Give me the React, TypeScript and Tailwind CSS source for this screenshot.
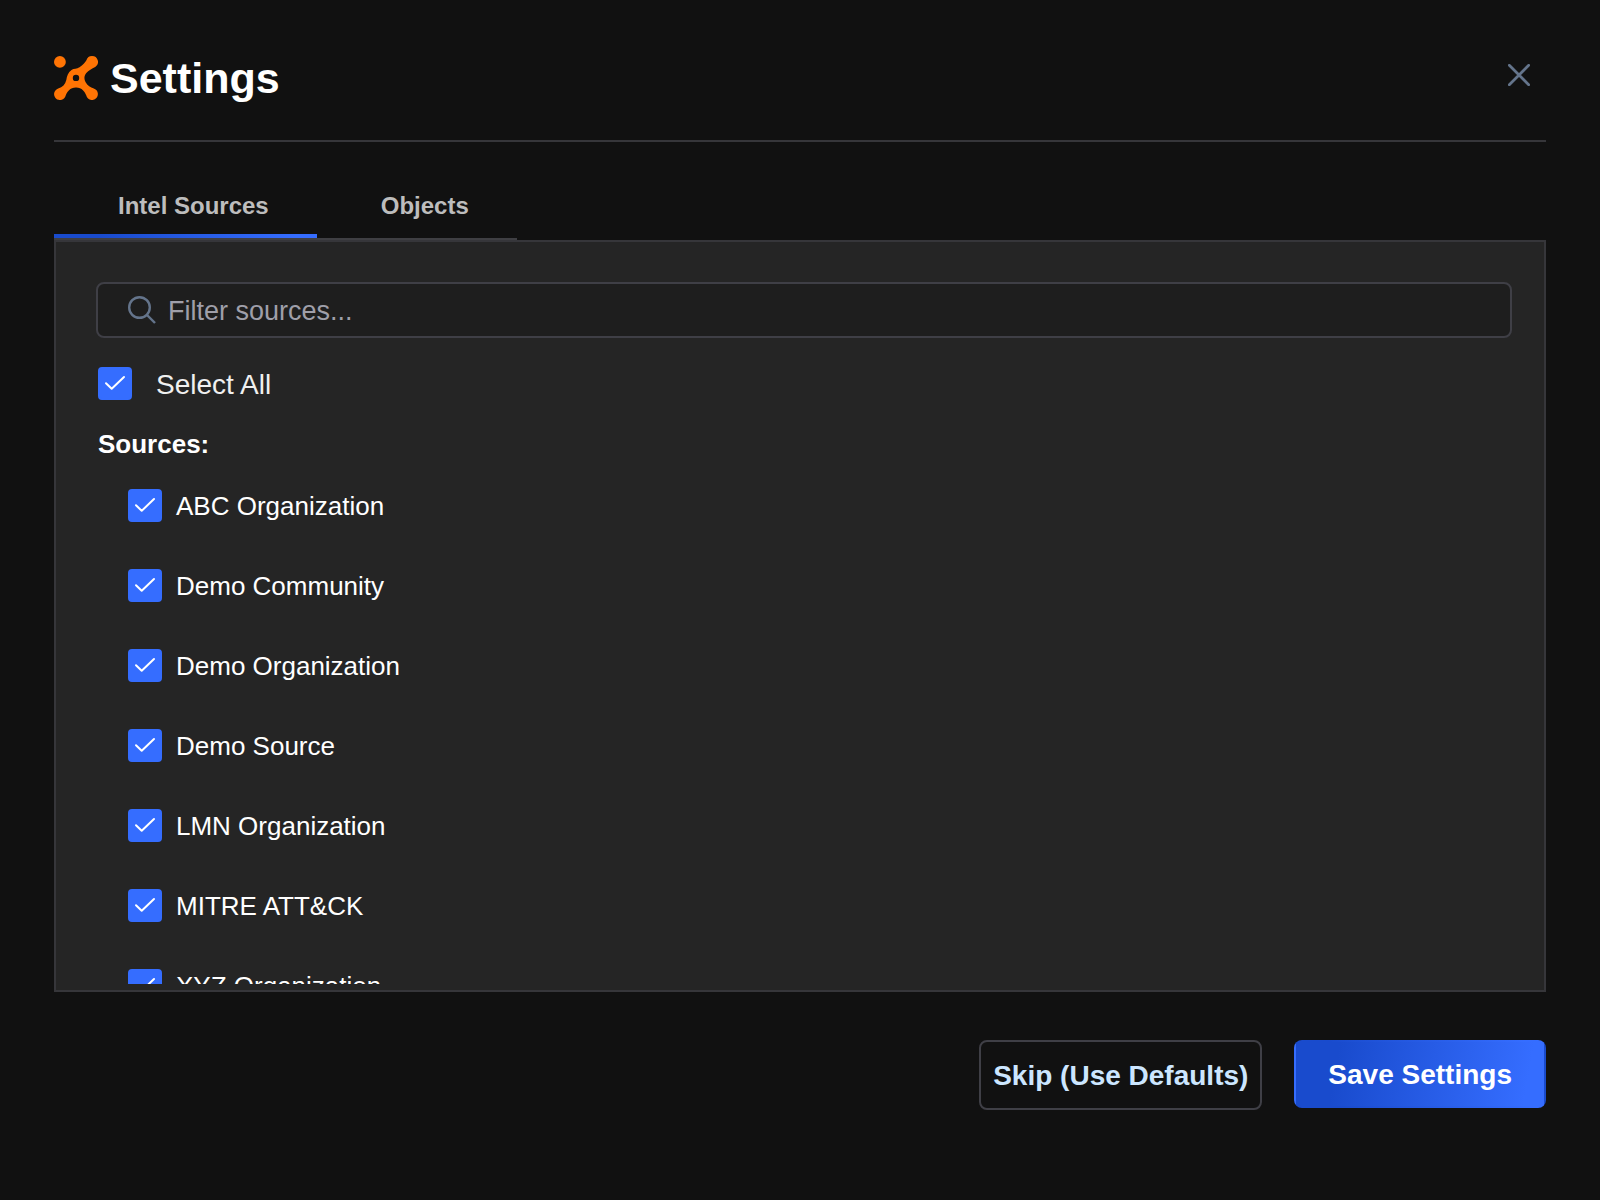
import { useState } from "react";

const SOURCES = [
  "ABC Organization",
  "Demo Community",
  "Demo Organization",
  "Demo Source",
  "LMN Organization",
  "MITRE ATT&CK",
  "XYZ Organization",
];

const TABS = ["Intel Sources", "Objects"];

const Logo = () => (
  <svg className="w-11 h-11" viewBox="0 0 44 44" fill="none" aria-hidden="true">
    <circle cx="5.9" cy="5.9" r="5.9" fill="#ff7404" />
    <path
      fill="#ff7404"
      fillRule="evenodd"
      d="M38.1 0A5.9 5.9 0 0 1 41.200 10.900C38 12.600 34.500 14.200 32.300 17C30 20 29.900 23 31.500 25.900C33.500 29.500 36.500 31.500 39.800 32.400A5.900 5.900 0 1 1 32.300 39.600C31 35.800 28 31.400 22 31.400C16 31.400 13 35.800 11.700 39.600A5.900 5.900 0 1 1 4.200 32.500C8.500 31.300 11.300 28.500 12.300 24C13 20 14 16.500 17.500 14C20 12.400 22.800 13 25.500 11.300C29 9 31 6.500 32.400 4.200A5.900 5.900 0 0 1 38.100 0ZM22 18.700a3.200 3.200 0 1 0 0 6.400a3.200 3.200 0 1 0 0-6.400Z"
    />
  </svg>
);

type CheckboxProps = {
  label: string;
  checked: boolean;
  onChange: () => void;
  className: string;
};

const Checkbox = ({ label, checked, onChange, className }: CheckboxProps) => (
  <label className={`flex items-start cursor-pointer ${className}`}>
    <span className="relative shrink-0 w-[34px] h-[33px]">
      <input
        type="checkbox"
        checked={checked}
        onChange={onChange}
        className="block w-full h-full appearance-none rounded-[4px] border-2 border-[#3f3f46] checked:border-[#356dff] checked:bg-[#356dff]"
      />
      {checked && (
        <svg
          className="absolute inset-0 w-full h-full pointer-events-none"
          viewBox="0 0 34 33"
          fill="none"
          stroke="#ffffff"
          strokeWidth="2"
          strokeLinecap="round"
          strokeLinejoin="round"
        >
          <path d="M8 16.300l5.700 5.500L26 10" />
        </svg>
      )}
    </span>
    <span className="h-[33px]">{label}</span>
  </label>
);

const App = () => {
  const [activeTab, setActiveTab] = useState("Intel Sources");
  const [filter, setFilter] = useState("");
  const [selected, setSelected] = useState<string[]>(SOURCES);

  const allSelected = selected.length === SOURCES.length;

  const toggle = (name: string) => {
    setSelected(
      selected.includes(name)
        ? selected.filter((item) => item !== name)
        : [...selected, name]
    );
  };

  const items = SOURCES.filter((name) =>
    name.toLowerCase().includes(filter.toLowerCase())
  );

  return (
    <main className="min-h-screen bg-[#111111] px-[54px] pt-14 pb-[90px] font-['Liberation_Sans',Arial,sans-serif] text-white">
      {/* Header */}
      <header className="flex items-start justify-between pb-10 border-b-2 border-[#36363a]">
        <div className="flex items-center gap-3">
          <Logo />
          <h1 className="text-[43px] leading-[44px] font-bold">Settings</h1>
        </div>
        <button type="button" aria-label="Close" className="mr-4 mt-2">
          <svg
            className="w-[22px] h-[22px]"
            viewBox="0 0 22 22"
            fill="none"
            stroke="#64748b"
            strokeWidth="2.700"
            strokeLinecap="round"
          >
            <path d="M1.300 1.300l19.400 19.400M20.700 1.300L1.300 20.700" />
          </svg>
        </button>
      </header>

      {/* Tabs */}
      <div role="tablist" className="flex w-fit mt-8 border-b-2 border-[#3f3f43]">
        {TABS.map((tab) => (
          <button
            key={tab}
            type="button"
            role="tab"
            aria-selected={activeTab === tab}
            onClick={() => setActiveTab(tab)}
            className="flex flex-col text-2xl leading-7 font-bold text-[#bdbdbd]"
          >
            <span className="pl-16 pr-12 pt-[18px] pb-[14px]">{tab}</span>
            <span
              className={`w-full h-1 ${
                activeTab === tab
                  ? "bg-[linear-gradient(100deg,#194bcd_17%,#356dff_92%)]"
                  : ""
              }`}
            />
          </button>
        ))}
      </div>

      {/* Panel */}
      <section className="h-[752px] flex flex-col border-2 border-[#36363a] bg-[#252525] pt-10 pl-10 pr-8 pb-[6px]">
        <label className="flex items-center gap-3 shrink-0 h-14 pl-[30px] pr-4 rounded-lg border-2 border-[#3f3f46] bg-[#1e1e1e]">
          <svg
            className="shrink-0 w-7 h-7"
            viewBox="0 0 28 28"
            fill="none"
            stroke="#64748b"
            strokeWidth="2.400"
          >
            <circle cx="11.500" cy="11.500" r="10.300" />
            <path d="M19 19L27 27" />
          </svg>
          <input
            type="text"
            aria-label="Filter sources"
            placeholder="Filter sources..."
            value={filter}
            onChange={(e) => setFilter(e.target.value)}
            className="flex-1 min-w-0 pt-[2px] bg-transparent outline-none text-[27px] leading-8 text-white placeholder:text-[#9f9fa9]"
          />
        </label>

        <div className="flex-1 min-h-0 overflow-hidden mt-[29px] pl-[2px]">
          <Checkbox
            label="Select All"
            checked={allSelected}
            onChange={() => setSelected(allSelected ? [] : SOURCES)}
            className="gap-6 w-fit text-[28px] leading-[35px] text-[#f0f0f0]"
          />
          <h2 className="mt-7 text-[26px] leading-8 font-bold">Sources:</h2>
          <ul className="mt-[29px] pl-[30px] flex flex-col gap-[47px]">
            {items.map((name) => (
              <li key={name}>
                <Checkbox
                  label={name}
                  checked={selected.includes(name)}
                  onChange={() => toggle(name)}
                  className="gap-[14px] w-fit text-[26px] leading-[35px]"
                />
              </li>
            ))}
          </ul>
        </div>
      </section>

      {/* Actions */}
      <footer className="flex items-start justify-end gap-8 mt-12">
        <button
          type="button"
          className="h-[70px] px-3 pt-[2px] rounded-lg border-2 border-[#3f3f46] text-[28px] leading-8 font-bold text-[#cce6ff]"
        >
          Skip (Use Defaults)
        </button>
        <button
          type="button"
          className="h-[68px] px-8 pt-[2px] rounded-lg border-2 border-transparent bg-[linear-gradient(100deg,#194bcd_17%,#356dff_92%)] text-[28px] leading-8 font-bold text-white"
        >
          Save Settings
        </button>
      </footer>
    </main>
  );
};

export default App;
